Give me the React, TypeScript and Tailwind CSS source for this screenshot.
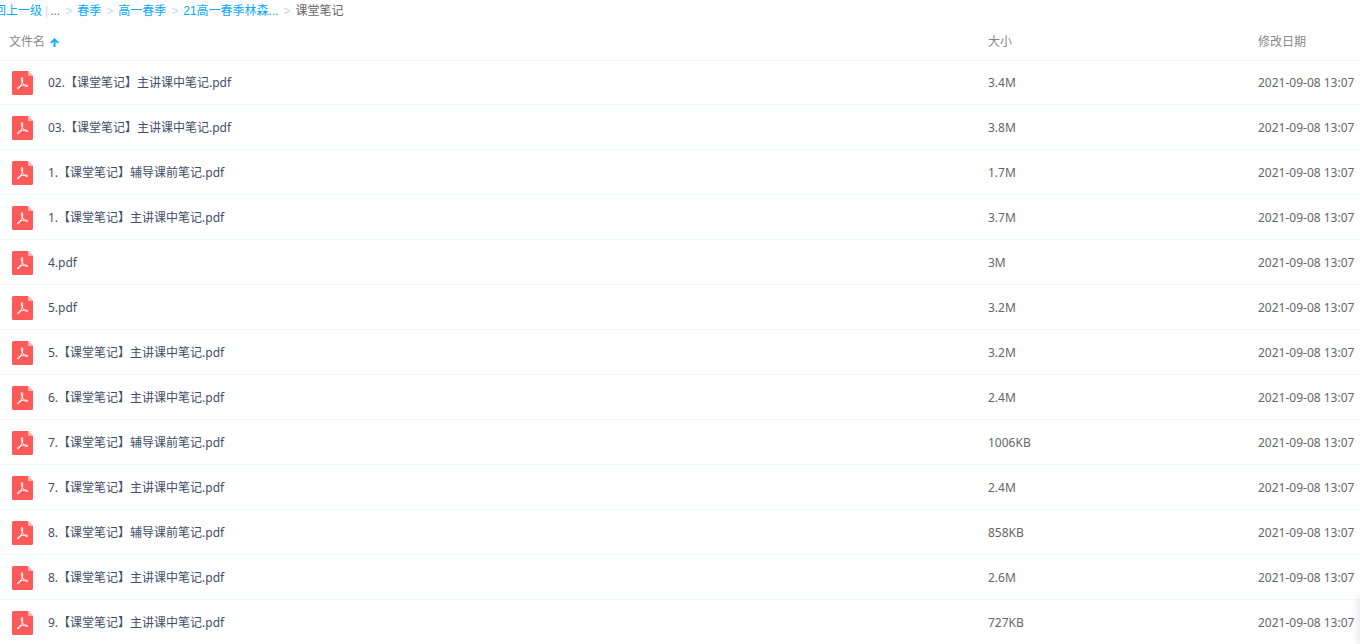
import { Fragment } from "react"

const crumbs = [
  { title: "春季", href: "#spring" },
  { title: "高一春季", href: "#grade-one-spring" },
  { title: "21高一春季林森...", href: "#linsen" },
]

const date = "2021-09-08 13:07"

const files = [
  { name: "02.【课堂笔记】主讲课中笔记.pdf", size: "3.4M", date },
  { name: "03.【课堂笔记】主讲课中笔记.pdf", size: "3.8M", date },
  { name: "1.【课堂笔记】辅导课前笔记.pdf", size: "1.7M", date },
  { name: "1.【课堂笔记】主讲课中笔记.pdf", size: "3.7M", date },
  { name: "4.pdf", size: "3M", date },
  { name: "5.pdf", size: "3.2M", date },
  { name: "5.【课堂笔记】主讲课中笔记.pdf", size: "3.2M", date },
  { name: "6.【课堂笔记】主讲课中笔记.pdf", size: "2.4M", date },
  { name: "7.【课堂笔记】辅导课前笔记.pdf", size: "1006KB", date },
  { name: "7.【课堂笔记】主讲课中笔记.pdf", size: "2.4M", date },
  { name: "8.【课堂笔记】辅导课前笔记.pdf", size: "858KB", date },
  { name: "8.【课堂笔记】主讲课中笔记.pdf", size: "2.6M", date },
  { name: "9.【课堂笔记】主讲课中笔记.pdf", size: "727KB", date },
]

const PdfIcon = () => (
  <svg width="21" height="24" viewBox="0 0 21 24" className="shrink-0" aria-hidden="true">
    <path d="M1.500 0H16L21 5V22.500a1.500 1.500 0 0 1-1.500 1.500H1.500a1.500 1.500 0 0 1-1.500-1.500V1.500a1.500 1.500 0 0 1 1.500-1.500Z" fill="#ff5a5a" />
    <path d="M16 0L21 5H17a1 1 0 0 1-1-1Z" fill="#ffb3b3" />
    <path
      d="M10 6.500c-1 0-.9 1.800-.2 3.600.8 2.100 2.300 4.200 4 5.200 1.200.6 2.200.1 2-.5-.3-.9-3.300-.8-5.300-.4-2 .4-4.500 1.500-5 2.700-.3.900.7 1.100 1.500.2 1.300-1.500 3.200-5 3.600-7.300.2-1.400.3-3.500-.6-3.500Z"
      fill="none"
      stroke="#fff"
      strokeWidth="1"
      strokeLinejoin="round"
    />
  </svg>
)

const SortArrow = () => (
  <svg width="9" height="9" viewBox="0 0 9 9" aria-hidden="true">
    <path d="M4.500 0L9 4.500L7.800 5.500L5.500 3.500V9H3.500V3.500L1.200 5.500L0 4.500Z" fill="#09aaff" />
  </svg>
)

const Separator = () => <span className="px-[5px] text-[#c4dbfe]">&gt;</span>

const Breadcrumb = () => (
  <nav className="-ml-[18px] flex h-[22px] items-center whitespace-nowrap font-['Liberation_Sans','Noto_Sans_CJK_SC',sans-serif] text-xs text-[#666]">
    <a href="#parent" className="text-[#09aaff]">
      返回上一级
    </a>
    <span className="pr-[2px] pl-[3px] text-[#c4dbfe]">|</span>
    <span>...</span>
    <Separator />
    {crumbs.map((crumb) => (
      <Fragment key={crumb.title}>
        <a href={crumb.href} className="text-[#09aaff]">
          {crumb.title}
        </a>
        <Separator />
      </Fragment>
    ))}
    <span>课堂笔记</span>
  </nav>
)

const App = () => {
  return (
    <main className="h-screen overflow-hidden bg-white font-['Noto_Sans','Noto_Sans_CJK_SC',sans-serif] text-xs text-[#666]">
      <Breadcrumb />

      <table className="w-full table-fixed border-separate border-spacing-0 whitespace-nowrap text-left">
        <thead>
          <tr className="h-[38px] text-[#888] *:p-0 *:pt-0.5 *:font-normal">
            <th>
              <button className="flex items-center gap-[5px] pl-[9px]">
                文件名
                <SortArrow />
              </button>
            </th>
            <th className="w-[270px]">大小</th>
            <th className="w-[102px]">修改日期</th>
          </tr>
        </thead>
        <tbody className="[&>tr:first-child>td]:border-t">
          {files.map((file) => (
            <tr key={file.name} className="h-[45px] *:border-b *:border-[#f2f6fd] *:p-0 *:pt-0.5 first:*:pt-0">
              <td>
                <div className="flex items-center gap-[15px] pl-3">
                  <PdfIcon />
                  <a href="#file" className="text-[#424e67]">
                    {file.name}
                  </a>
                </div>
              </td>
              <td>{file.size}</td>
              <td>{file.date}</td>
            </tr>
          ))}
        </tbody>
      </table>

      <div className="fixed -right-10 bottom-0 h-12 w-10 shadow-[0_0_10px_rgba(0,0,0,0.15)]" />
    </main>
  )
}

export default App
